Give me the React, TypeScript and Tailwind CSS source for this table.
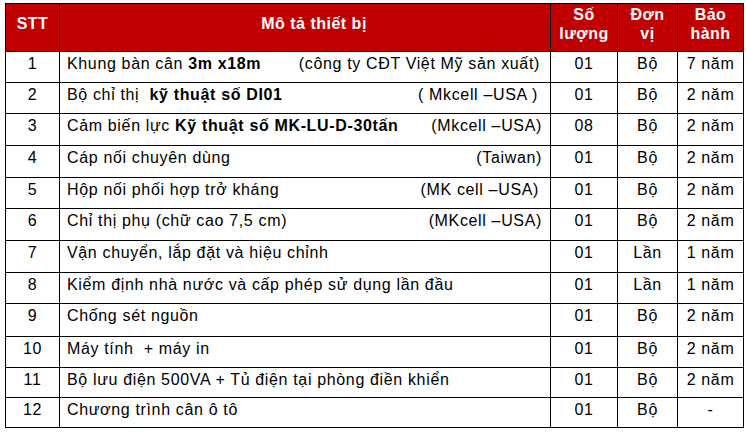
import React from "react";

type Row = {
  stt: string;
  desc: React.ReactNode;
  note?: string;
  notePad?: string;
  qty: string;
  unit: string;
  warranty: string;
  h: string;
};

const rows: Row[] = [
  {
    stt: "1",
    desc: (
      <>
        Khung bàn cân <b>3m x18m</b>
      </>
    ),
    note: "(công ty CĐT Việt Mỹ sản xuất)",
    notePad: "pr-[10px]",
    qty: "01",
    unit: "Bộ",
    warranty: "7 năm",
    h: "h-[31px]",
  },
  {
    stt: "2",
    desc: (
      <>
        Bộ chỉ thị&nbsp; <b>kỹ thuật số DI01</b>
      </>
    ),
    note: "( Mkcell –USA )",
    notePad: "pr-[12px]",
    qty: "01",
    unit: "Bộ",
    warranty: "2 năm",
    h: "h-[31px]",
  },
  {
    stt: "3",
    desc: (
      <>
        Cảm biến lực <b>Kỹ thuật số MK-LU-D-30tấn</b>
      </>
    ),
    note: "(Mkcell –USA)",
    notePad: "pr-[8px]",
    qty: "08",
    unit: "Bộ",
    warranty: "2 năm",
    h: "h-[32px]",
  },
  {
    stt: "4",
    desc: "Cáp nối chuyên dùng",
    note: "(Taiwan)",
    notePad: "pr-[8px]",
    qty: "01",
    unit: "Bộ",
    warranty: "2 năm",
    h: "h-[32px]",
  },
  {
    stt: "5",
    desc: "Hộp nối phối hợp trở kháng",
    note: "(MK cell –USA)",
    notePad: "pr-[11px]",
    qty: "01",
    unit: "Bộ",
    warranty: "2 năm",
    h: "h-[31px]",
  },
  {
    stt: "6",
    desc: "Chỉ thị phụ (chữ cao 7,5 cm)",
    note: "(MKcell –USA)",
    notePad: "pr-[8px]",
    qty: "01",
    unit: "Bộ",
    warranty: "2 năm",
    h: "h-[32px]",
  },
  {
    stt: "7",
    desc: "Vận chuyển, lắp đặt và hiệu chỉnh",
    qty: "01",
    unit: "Lần",
    warranty: "1 năm",
    h: "h-[32px]",
  },
  {
    stt: "8",
    desc: "Kiểm định nhà nước và cấp phép sử dụng lần đầu",
    qty: "01",
    unit: "Lần",
    warranty: "1 năm",
    h: "h-[31px]",
  },
  {
    stt: "9",
    desc: "Chống sét nguồn",
    qty: "01",
    unit: "Bộ",
    warranty: "2 năm",
    h: "h-[33px]",
  },
  {
    stt: "10",
    desc: <>Máy tính&nbsp; + máy in</>,
    qty: "01",
    unit: "Bộ",
    warranty: "2 năm",
    h: "h-[31px]",
  },
  {
    stt: "11",
    desc: "Bộ lưu điện 500VA + Tủ điện tại phòng điền khiển",
    qty: "01",
    unit: "Bộ",
    warranty: "2 năm",
    h: "h-[30px]",
  },
  {
    stt: "12",
    desc: "Chương trình cân ô tô",
    qty: "01",
    unit: "Bộ",
    warranty: "-",
    h: "h-[30px]",
  },
];

const head = "border border-black bg-[#c00000] text-white font-bold text-center align-middle pb-[8px] leading-[19px] tracking-[0.5px]";
const cell = "border border-black align-top pt-[2px] leading-[19px] tracking-[0.65px]";

export default function App() {
  return (
    <div className="w-[746px] h-[432px] bg-white pt-[3px] pl-[5px] font-['Liberation_Sans',Arial,sans-serif] text-[16px] text-black">
      <table className="w-[738px] table-fixed border-collapse">
        <colgroup>
          <col className="w-[54px]" />
          <col className="w-[491px]" />
          <col className="w-[67px]" />
          <col className="w-[60px]" />
          <col className="w-[66px]" />
        </colgroup>
        <thead>
          <tr className="h-[48px]">
            <th className={head}>STT</th>
            <th className={`${head} pl-[18px]`}>Mô tả thiết bị</th>
            <th className={head}>
              Số
              <br />
              lượng
            </th>
            <th className={head}>
              Đơn
              <br />
              vị
            </th>
            <th className={head}>
              Bảo
              <br />
              hành
            </th>
          </tr>
        </thead>
        <tbody>
          {rows.map((r) => (
            <tr key={r.stt} className={r.h}>
              <td className={`${cell} text-center`}>{r.stt}</td>
              <td className={`${cell} pl-[7px] ${r.notePad ?? ""}`}>
                <div className="flex justify-between whitespace-nowrap">
                  <span>{r.desc}</span>
                  {r.note && <span>{r.note}</span>}
                </div>
              </td>
              <td className={`${cell} text-center`}>{r.qty}</td>
              <td className={`${cell} text-center`}>{r.unit}</td>
              <td className={`${cell} text-center`}>{r.warranty}</td>
            </tr>
          ))}
        </tbody>
      </table>
    </div>
  );
}
